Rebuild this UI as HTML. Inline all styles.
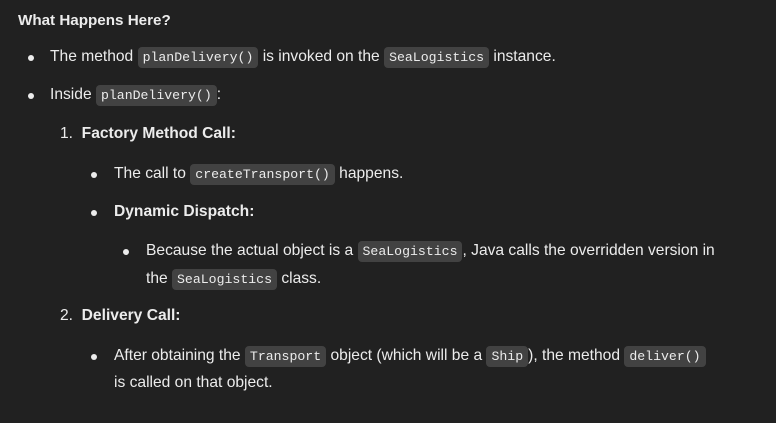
<!DOCTYPE html>
<html><head><style>
body{margin:0;width:776px;height:423px;background:#212121;color:#ececec;font-family:"Liberation Sans",sans-serif;font-size:15.6px;overflow:hidden;position:relative}
.l{position:absolute;white-space:nowrap;line-height:20px}
b{font-weight:bold}
code{font-family:"Liberation Mono",monospace;font-size:13.2px;background:#424242;border-radius:4px;padding:3px 5px;color:#ececec}
.d{position:absolute;width:6px;height:6px;border-radius:50%;background:#ececec}
</style></head><body>
<div class="l" style="left:18px;top:11px;font-size:15.2px"><b>What Happens Here?</b></div>
<div class="d" style="left:28px;top:55px"></div>
<div class="l" style="left:50px;top:47px">The method <code>planDelivery()</code> is invoked on the <code>SeaLogistics</code> instance.</div>
<div class="d" style="left:28px;top:93px"></div>
<div class="l" style="left:50px;top:85px">Inside <code>planDelivery()</code>:</div>
<div class="l" style="left:60px;top:124px">1.&nbsp; <b>Factory Method Call:</b></div>
<div class="d" style="left:91px;top:172px"></div>
<div class="l" style="left:114px;top:164px">The call to <code>createTransport()</code> happens.</div>
<div class="d" style="left:91px;top:210px"></div>
<div class="l" style="left:114px;top:202px"><b>Dynamic Dispatch:</b></div>
<div class="d" style="left:123px;top:249px"></div>
<div class="l" style="left:146px;top:241px">Because the actual object is a <code>SeaLogistics</code>, Java calls the overridden version in</div>
<div class="l" style="left:146px;top:269px">the <code>SeaLogistics</code> class.</div>
<div class="l" style="left:60px;top:306px">2.&nbsp; <b>Delivery Call:</b></div>
<div class="d" style="left:91px;top:354px"></div>
<div class="l" style="left:114px;top:346px">After obtaining the <code>Transport</code> object (which will be a <code>Ship</code>), the method <code>deliver()</code></div>
<div class="l" style="left:114px;top:373px">is called on that object.</div>
</body></html>
